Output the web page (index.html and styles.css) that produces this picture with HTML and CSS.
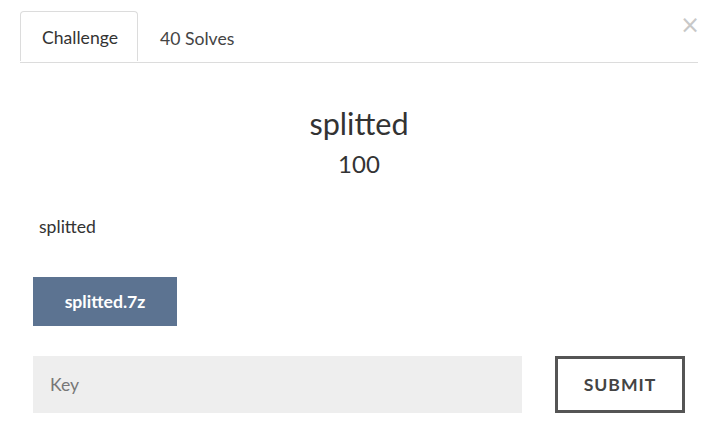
FILE: index.html
```html
<!DOCTYPE html>
<html>
<head>
<meta charset="utf-8">
<link rel="stylesheet" href="styles.css">
</head>
<body>
<div class="modal">
  <div class="tabs">
    <div class="tab active">Challenge</div>
    <div class="tab">40 Solves</div>
    <div class="close">&times;</div>
  </div>
  <div class="content">
    <h1 class="title">splitted</h1>
    <div class="points">100</div>
    <p class="desc">splitted</p>
    <div class="files"><a class="file">splitted.7z</a></div>
    <div class="submit-row">
      <div class="key">Key</div>
      <div class="submit">SUBMIT</div>
    </div>
  </div>
</div>
</body>
</html>
```
FILE: styles.css
```css
html, body {
  margin: 0;
  padding: 0;
  background: #fff;
}
body {
  font-family: Lato, "Open Sans", sans-serif;
  color: #333;
}
.modal {
  width: 705px;
  height: 432px;
  box-sizing: border-box;
  padding: 11px 7px 0 20px;
}
.tabs {
  display: flex;
  align-items: stretch;
  border-bottom: 1px solid #dcdcdc;
  height: 51px;
  position: relative;
}
.tab {
  font-size: 17.6px;
  padding: 0 21px;
  display: flex;
  align-items: center;
  color: #444;
  border: 1px solid transparent;
  border-bottom: none;
  margin-bottom: -1px;
  padding-top: 1px;
}
.tab.active {
  border-color: #dcdcdc;
  border-radius: 4px 4px 0 0;
  background: #fff;
  color: #333;
  height: 50px;
  box-sizing: border-box;
  padding-right: 19px;
}
.close {
  position: absolute;
  right: -2px;
  top: 0;
  font-size: 24px;
  line-height: 28px;
  color: #c8c8c8;
  font-family: "DejaVu Sans", sans-serif;
}
.content {
  padding: 0 13px 0 13px;
}
.title {
  margin: 43px 0 0;
  text-align: center;
  font-weight: 400;
  font-size: 30.6px;
  line-height: 36px;
}
.points {
  text-align: center;
  font-size: 24px;
  line-height: 30px;
  margin-top: 7px;
}
.desc {
  margin: 37px 0 0 6px;
  font-size: 17.6px;
  line-height: 22px;
}
.files {
  margin-top: 39px;
  display: flex;
}
.file {
  background: #5c7391;
  color: #fff;
  font-weight: 700;
  font-size: 17.6px;
  width: 144px;
  height: 49px;
  display: flex;
  align-items: center;
  justify-content: center;
}
.submit-row {
  margin-top: 30px;
  display: flex;
  justify-content: space-between;
}
.key {
  width: 489px;
  height: 57px;
  background: #eee;
  color: #777;
  font-size: 17.6px;
  display: flex;
  align-items: center;
  padding-left: 17px;
  box-sizing: border-box;
}
.submit {
  width: 130px;
  height: 57px;
  box-sizing: border-box;
  border: 3px solid #555;
  display: flex;
  align-items: center;
  justify-content: center;
  font-weight: 700;
  font-size: 17.6px;
  letter-spacing: 1px;
  color: #444;
}
```
